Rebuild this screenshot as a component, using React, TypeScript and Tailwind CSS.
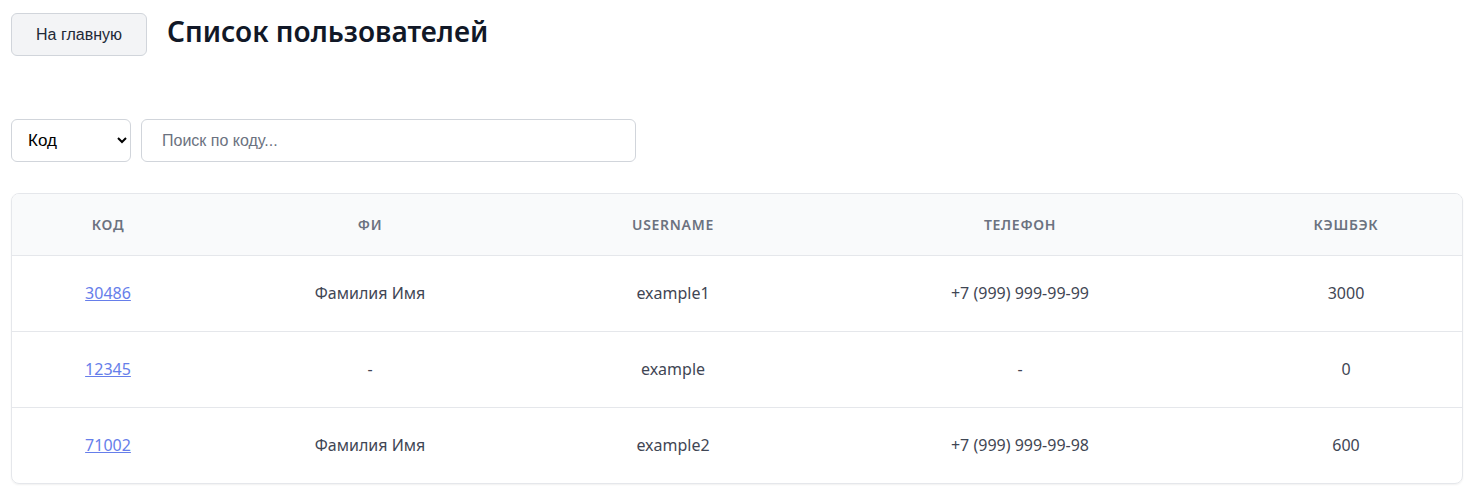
import { useState } from 'react'

interface User {
  code: string
  name: string
  username: string
  phone: string
  cashback: number
}

const users: User[] = [
  { code: '30486', name: 'Фамилия Имя', username: 'example1', phone: '+7 (999) 999-99-99', cashback: 3000 },
  { code: '12345', name: '-', username: 'example', phone: '-', cashback: 0 },
  { code: '71002', name: 'Фамилия Имя', username: 'example2', phone: '+7 (999) 999-99-98', cashback: 600 },
]

const columns = [
  { label: 'Код', width: 'w-[192px]' },
  { label: 'ФИ', width: 'w-[332px]' },
  { label: 'Username', width: 'w-[274px]' },
  { label: 'Телефон', width: 'w-[420px]' },
  { label: 'Кэшбэк', width: '' },
]

export default function App() {
  const [field, setField] = useState('code')
  const [query, setQuery] = useState('')

  return (
    <div
      className="min-h-screen bg-white px-[11px] pt-[13px] text-[#3f4654]"
      style={{ fontFamily: '"Noto Sans", "Open Sans", sans-serif' }}
    >
      <div className="flex items-center gap-5">
        <button className="h-[43px] w-[136px] rounded-md border border-[#d1d5db] bg-[#f3f4f6] text-[16px] text-[#1f2937] [font-family:'Liberation_Sans',Arial,sans-serif]">
          На главную
        </button>
        <h1 className="-mt-[8px] text-[28px] font-semibold text-[#111827]">Список пользователей</h1>
      </div>

      <div className="mt-[63px] flex gap-[10px]">
        <select
          value={field}
          onChange={(e) => setField(e.target.value)}
          className="h-[43px] w-[120px] rounded-md border border-[#d1d5db] bg-white pl-[12px] text-[17px] text-black [font-family:'Liberation_Sans',Arial,sans-serif]"
        >
          <option value="code">Код</option>
          <option value="name">ФИ</option>
          <option value="username">Username</option>
        </select>
        <input
          value={query}
          onChange={(e) => setQuery(e.target.value)}
          placeholder="Поиск по коду..."
          className="h-[43px] w-[495px] rounded-md border border-[#d1d5db] px-5 text-[16px] text-black placeholder:text-[#6b7280] outline-none [font-family:'Liberation_Sans',Arial,sans-serif]"
        />
      </div>

      <div className="mt-[31px] overflow-hidden rounded-lg border border-[#e5e7eb] shadow-[0_1px_2px_rgba(0,0,0,0.06)]">
        <table className="w-full table-fixed border-collapse text-center">
          <thead className="bg-[#f9fafb]">
            <tr className="h-[61px] border-b border-[#e5e7eb]">
              {columns.map((c) => (
                <th
                  key={c.label}
                  className={`${c.width} text-[14px] font-semibold uppercase tracking-[0.05em] text-[#6b7280]`}
                >
                  {c.label}
                </th>
              ))}
            </tr>
          </thead>
          <tbody className="text-[16px]">
            {users.map((u, i) => (
              <tr key={u.code} className={`h-[76px] ${i < users.length - 1 ? 'border-b border-[#e5e7eb]' : ''}`}>
                <td>
                  <a href="#" className="text-[#667eea] underline">
                    {u.code}
                  </a>
                </td>
                <td>{u.name}</td>
                <td>{u.username}</td>
                <td>{u.phone}</td>
                <td>{u.cashback}</td>
              </tr>
            ))}
          </tbody>
        </table>
      </div>
    </div>
  )
}
